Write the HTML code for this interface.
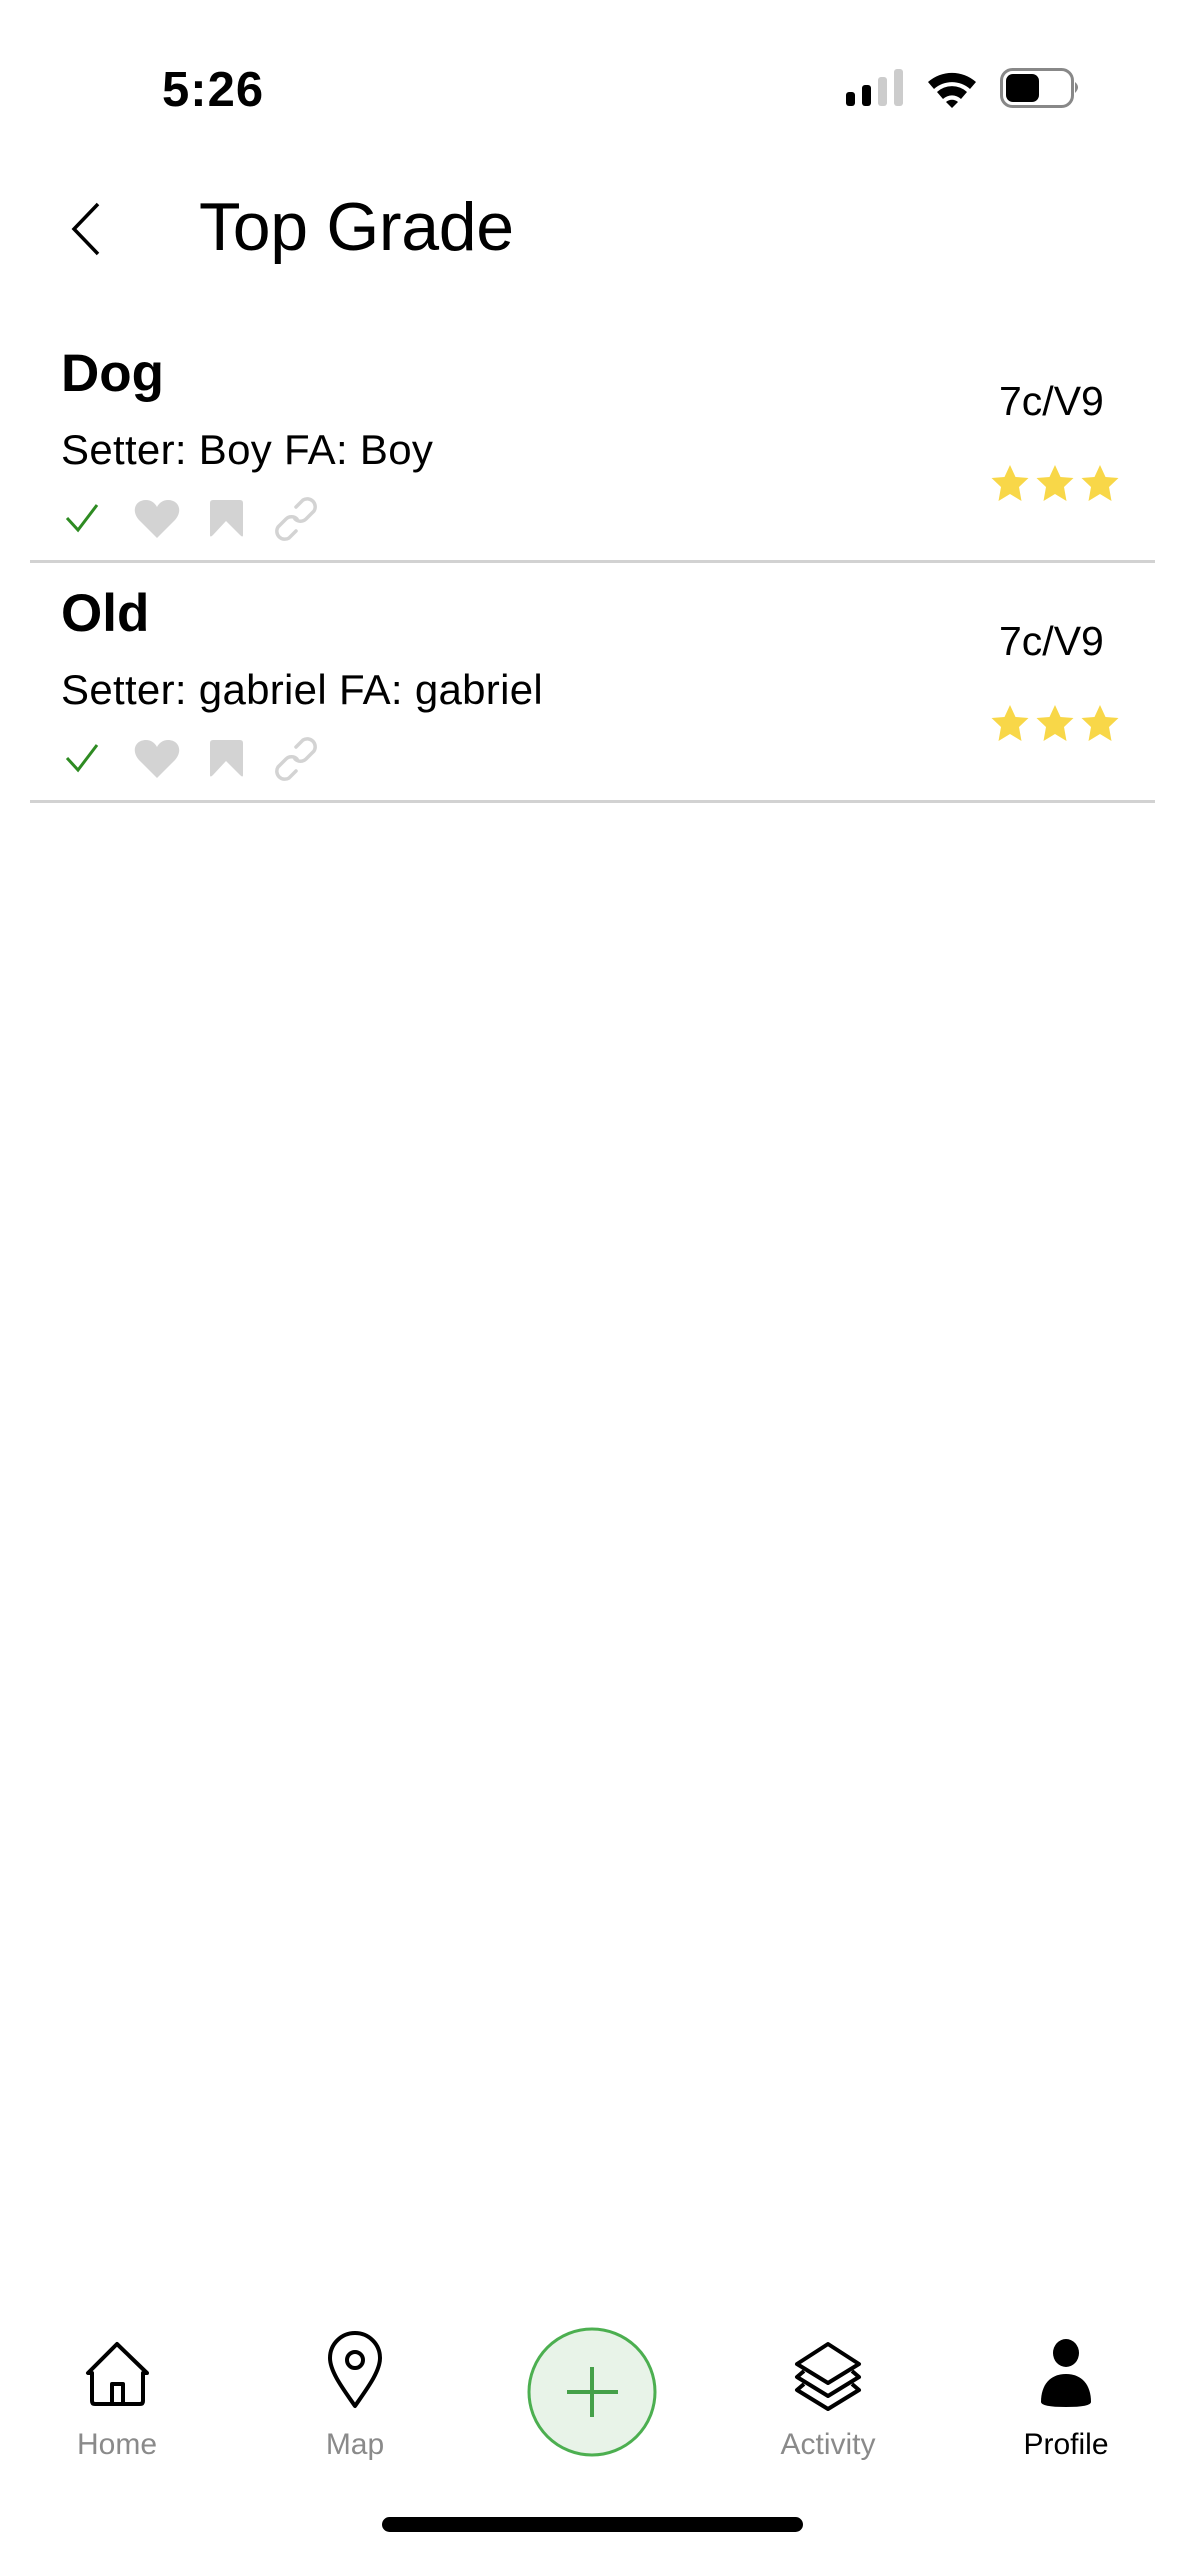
<!DOCTYPE html>
<html><head><meta charset="utf-8"><style>
*{margin:0;padding:0;box-sizing:border-box}
body{width:1179px;height:2556px;background:#fff;position:relative;overflow:hidden;font-family:"Liberation Sans",sans-serif;color:#000}
.a{position:absolute;white-space:nowrap}
.div{position:absolute;left:30px;width:1125px;height:3px;background:#d2d2d2}
.lbl{position:absolute;top:2428px;font-size:30px;color:#8a8a8a;transform:translateX(-50%)}
</style></head><body>
<div class="a" style="left:162px;top:62px;font-size:49px;font-weight:bold;letter-spacing:1px">5:26</div>
<svg class="a" style="left:840px;top:60px" width="250" height="55" viewBox="840 60 250 55">
<rect x="846" y="92" width="9" height="14" rx="3" fill="#000"/>
<rect x="862" y="85" width="9" height="21" rx="3" fill="#000"/>
<rect x="878" y="77" width="9" height="29" rx="3" fill="#ccc"/>
<rect x="894" y="69" width="9" height="37" rx="3" fill="#ccc"/>
<path d="M928 82 A36 36 0 0 1 976 82 L970 89 A27 27 0 0 0 934 89 Z" fill="#000"/>
<path d="M937 92 A22 22 0 0 1 967 92 L961 99 A13 13 0 0 0 943 99 Z" fill="#000"/>
<path d="M946 102 A9 9 0 0 1 958 102 L952 108 Z" fill="#000"/>
<rect x="1001.5" y="69.5" width="71" height="37" rx="11" fill="none" stroke="#888" stroke-width="3"/>
<rect x="1006" y="74" width="33" height="28" rx="7" fill="#000"/>
<path d="M1075 82 Q1081 87 1075 93 Z" fill="#888"/>
</svg>
<svg class="a" style="left:66px;top:198px" width="40" height="60"><path d="M32 6 L8 31 L32 56" fill="none" stroke="#000" stroke-width="3.5"/></svg>
<div class="a" style="left:199px;top:188px;font-size:68px;letter-spacing:-0.3px">Top Grade</div>

<div class="a" style="left:61px;top:343px;font-size:53px;font-weight:bold">Dog</div>
<div class="a" style="left:61px;top:426px;font-size:42px;letter-spacing:0.3px">Setter: Boy FA: Boy</div>
<div class="a" style="left:999px;top:378px;font-size:41px">7c/V9</div>
<div class="div" style="top:560px"></div>

<div class="a" style="left:61px;top:583px;font-size:53px;font-weight:bold">Old</div>
<div class="a" style="left:61px;top:666px;font-size:42px;letter-spacing:0.3px">Setter: gabriel FA: gabriel</div>
<div class="a" style="left:999px;top:618px;font-size:41px">7c/V9</div>
<div class="div" style="top:800px"></div>

<svg class="a" style="left:0;top:0" width="1179" height="820" viewBox="0 0 1179 820">
<defs>
<g id="icons">
<path d="M67 518 L78 530 L97 505" fill="none" stroke="#2e8b22" stroke-width="3"/>
<path d="M157 538 L139 520 C131 511 135 500 146 500 C151 500 155 503 157 507 C159 503 163 500 168 500 C179 500 183 511 175 520 Z" fill="#d3d3d3"/>
<path d="M210 503 Q210 500 213 500 L240 500 Q243 500 243 503 L243 535 Q243 538 240 535 L226 521 L213 535 Q210 538 210 535 Z" fill="#d3d3d3"/>
<g fill="none" stroke="#d3d3d3" stroke-width="3.5" stroke-linecap="round">
<path d="M296 507 L303 500 A8 8 0 0 1 314 511 L306 519 A8 8 0 0 1 295 519"/>
<path d="M296 531 L289 538 A8 8 0 0 1 278 527 L286 519 A8 8 0 0 1 297 519"/>
</g>
</g>
<path id="st" d="M0 -19 L5.5 -7 L18.5 -6 L9 3 L11.5 17 L0 10 L-11.5 17 L-9 3 L-18.5 -6 L-5.5 -7 Z" fill="#f8d748"/>
</defs>
<use href="#icons"/>
<use href="#st" x="1010" y="484"/><use href="#st" x="1055" y="484"/><use href="#st" x="1100" y="484"/>
<g transform="translate(0,240)"><use href="#icons"/>
<use href="#st" x="1010" y="484"/><use href="#st" x="1055" y="484"/><use href="#st" x="1100" y="484"/></g>
</svg>

<svg class="a" style="left:0;top:2320px" width="1179" height="150" viewBox="0 2320 1179 150">
<g fill="none" stroke="#000" stroke-width="4" stroke-linejoin="round">
<path d="M117 2344 L88 2373 L92 2373 L92 2401 Q92 2404 95 2404 L140 2404 Q143 2404 143 2401 L143 2373 L147 2373 Z"/>
<path d="M112 2404 L112 2384 L123 2384 L123 2404"/>
<path d="M355 2406 C344 2390 330 2372 330 2358 A25 25 0 0 1 380 2358 C380 2372 366 2390 355 2406 Z"/>
<circle cx="355" cy="2360" r="8"/>
<path d="M828 2344 L859 2364 L828 2383 L797 2364 Z"/>
<path d="M804 2371 L797 2377 L828 2396 L859 2377 L852 2371"/>
<path d="M804 2384 L797 2390 L828 2409 L859 2390 L852 2384"/>
</g>
<ellipse cx="1066" cy="2353" rx="13" ry="14" fill="#000"/>
<path d="M1041 2402 C1041 2385 1050 2374 1066 2374 C1082 2374 1091 2385 1091 2402 Q1091 2407 1066 2407 Q1041 2407 1041 2402 Z" fill="#000"/>
<circle cx="592" cy="2392" r="63" fill="#e8f3e8" stroke="#4caf50" stroke-width="3"/>
<path d="M567 2392 H618 M592 2367 V2417" stroke="#45a049" stroke-width="4"/>
</svg>
<div class="lbl" style="left:117px">Home</div>
<div class="lbl" style="left:355px">Map</div>
<div class="lbl" style="left:828px">Activity</div>
<div class="lbl" style="left:1066px;color:#000">Profile</div>
<div class="a" style="left:382px;top:2517px;width:421px;height:15px;border-radius:8px;background:#000"></div>
</body></html>
